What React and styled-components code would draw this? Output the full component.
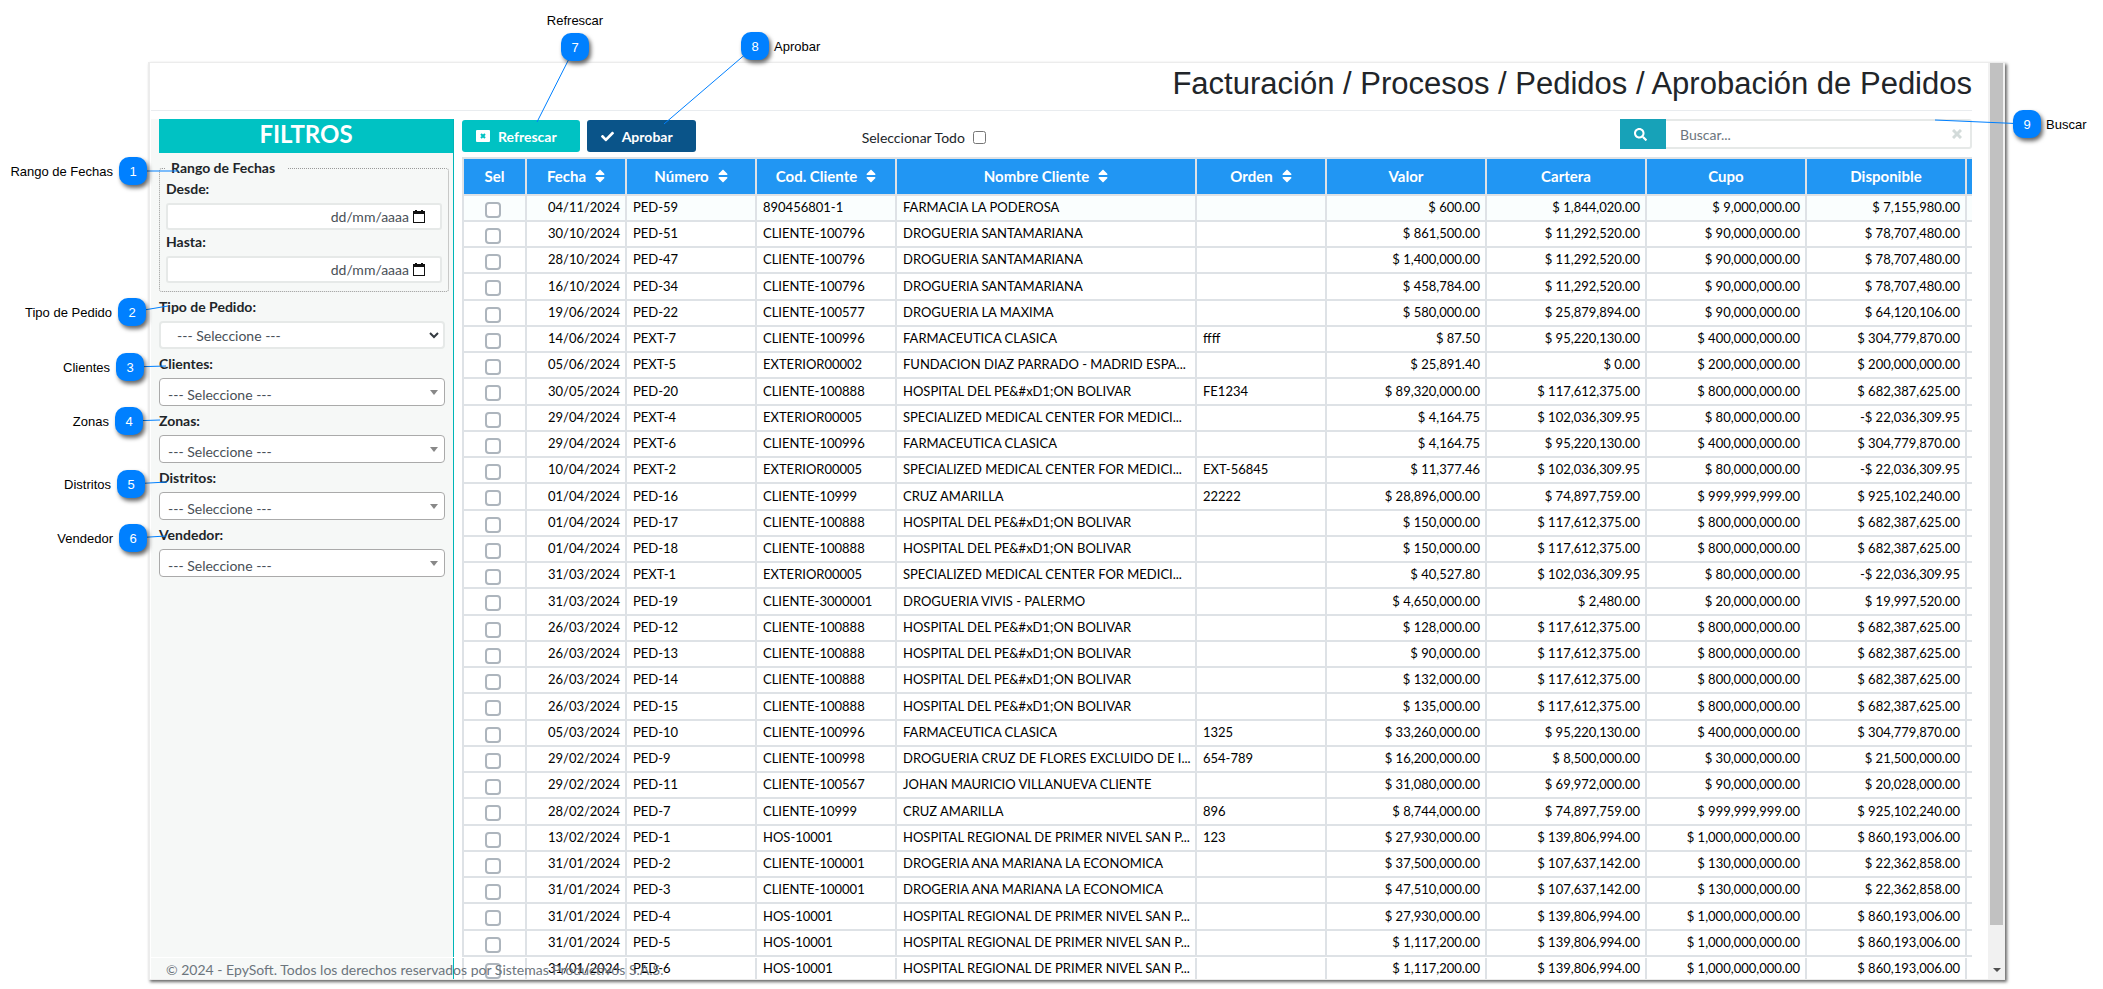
import React, { useState } from 'react'
import styled, { createGlobalStyle } from 'styled-components'
import { FaCheck, FaSearch, FaSort } from 'react-icons/fa'

const clientes = {
    dro: ['CLIENTE-100796', 'DROGUERIA SANTAMARIANA'],
    farma: ['CLIENTE-100996', 'FARMACEUTICA CLASICA'],
    hosp: ['CLIENTE-100888', 'HOSPITAL DEL PE&#xD1;ON BOLIVAR'],
    smc: ['EXTERIOR00005', 'SPECIALIZED MEDICAL CENTER FOR MEDICI...'],
    cruz: ['CLIENTE-10999', 'CRUZ AMARILLA'],
    ana: ['CLIENTE-100001', 'DROGERIA ANA MARIANA LA ECONOMICA'],
    hos: ['HOS-10001', 'HOSPITAL REGIONAL DE PRIMER NIVEL SAN P...'],
}

// fecha, numero, codigo, nombre, orden, valor, cartera, cupo, disponible
const pedidos = [
    ['04/11/2024', 'PED-59', '890456801-1', 'FARMACIA LA PODEROSA', '', '$ 600.00', '$ 1,844,020.00', '$ 9,000,000.00', '$ 7,155,980.00'],
    ['30/10/2024', 'PED-51', ...clientes.dro, '', '$ 861,500.00', '$ 11,292,520.00', '$ 90,000,000.00', '$ 78,707,480.00'],
    ['28/10/2024', 'PED-47', ...clientes.dro, '', '$ 1,400,000.00', '$ 11,292,520.00', '$ 90,000,000.00', '$ 78,707,480.00'],
    ['16/10/2024', 'PED-34', ...clientes.dro, '', '$ 458,784.00', '$ 11,292,520.00', '$ 90,000,000.00', '$ 78,707,480.00'],
    ['19/06/2024', 'PED-22', 'CLIENTE-100577', 'DROGUERIA LA MAXIMA', '', '$ 580,000.00', '$ 25,879,894.00', '$ 90,000,000.00', '$ 64,120,106.00'],
    ['14/06/2024', 'PEXT-7', ...clientes.farma, 'ffff', '$ 87.50', '$ 95,220,130.00', '$ 400,000,000.00', '$ 304,779,870.00'],
    ['05/06/2024', 'PEXT-5', 'EXTERIOR00002', 'FUNDACION DIAZ PARRADO - MADRID ESPA...', '', '$ 25,891.40', '$ 0.00', '$ 200,000,000.00', '$ 200,000,000.00'],
    ['30/05/2024', 'PED-20', ...clientes.hosp, 'FE1234', '$ 89,320,000.00', '$ 117,612,375.00', '$ 800,000,000.00', '$ 682,387,625.00'],
    ['29/04/2024', 'PEXT-4', ...clientes.smc, '', '$ 4,164.75', '$ 102,036,309.95', '$ 80,000,000.00', '-$ 22,036,309.95'],
    ['29/04/2024', 'PEXT-6', ...clientes.farma, '', '$ 4,164.75', '$ 95,220,130.00', '$ 400,000,000.00', '$ 304,779,870.00'],
    ['10/04/2024', 'PEXT-2', ...clientes.smc, 'EXT-56845', '$ 11,377.46', '$ 102,036,309.95', '$ 80,000,000.00', '-$ 22,036,309.95'],
    ['01/04/2024', 'PED-16', ...clientes.cruz, '22222', '$ 28,896,000.00', '$ 74,897,759.00', '$ 999,999,999.00', '$ 925,102,240.00'],
    ['01/04/2024', 'PED-17', ...clientes.hosp, '', '$ 150,000.00', '$ 117,612,375.00', '$ 800,000,000.00', '$ 682,387,625.00'],
    ['01/04/2024', 'PED-18', ...clientes.hosp, '', '$ 150,000.00', '$ 117,612,375.00', '$ 800,000,000.00', '$ 682,387,625.00'],
    ['31/03/2024', 'PEXT-1', ...clientes.smc, '', '$ 40,527.80', '$ 102,036,309.95', '$ 80,000,000.00', '-$ 22,036,309.95'],
    ['31/03/2024', 'PED-19', 'CLIENTE-3000001', 'DROGUERIA VIVIS - PALERMO', '', '$ 4,650,000.00', '$ 2,480.00', '$ 20,000,000.00', '$ 19,997,520.00'],
    ['26/03/2024', 'PED-12', ...clientes.hosp, '', '$ 128,000.00', '$ 117,612,375.00', '$ 800,000,000.00', '$ 682,387,625.00'],
    ['26/03/2024', 'PED-13', ...clientes.hosp, '', '$ 90,000.00', '$ 117,612,375.00', '$ 800,000,000.00', '$ 682,387,625.00'],
    ['26/03/2024', 'PED-14', ...clientes.hosp, '', '$ 132,000.00', '$ 117,612,375.00', '$ 800,000,000.00', '$ 682,387,625.00'],
    ['26/03/2024', 'PED-15', ...clientes.hosp, '', '$ 135,000.00', '$ 117,612,375.00', '$ 800,000,000.00', '$ 682,387,625.00'],
    ['05/03/2024', 'PED-10', ...clientes.farma, '1325', '$ 33,260,000.00', '$ 95,220,130.00', '$ 400,000,000.00', '$ 304,779,870.00'],
    ['29/02/2024', 'PED-9', 'CLIENTE-100998', 'DROGUERIA CRUZ DE FLORES EXCLUIDO DE I...', '654-789', '$ 16,200,000.00', '$ 8,500,000.00', '$ 30,000,000.00', '$ 21,500,000.00'],
    ['29/02/2024', 'PED-11', 'CLIENTE-100567', 'JOHAN MAURICIO VILLANUEVA CLIENTE', '', '$ 31,080,000.00', '$ 69,972,000.00', '$ 90,000,000.00', '$ 20,028,000.00'],
    ['28/02/2024', 'PED-7', ...clientes.cruz, '896', '$ 8,744,000.00', '$ 74,897,759.00', '$ 999,999,999.00', '$ 925,102,240.00'],
    ['13/02/2024', 'PED-1', ...clientes.hos, '123', '$ 27,930,000.00', '$ 139,806,994.00', '$ 1,000,000,000.00', '$ 860,193,006.00'],
    ['31/01/2024', 'PED-2', ...clientes.ana, '', '$ 37,500,000.00', '$ 107,637,142.00', '$ 130,000,000.00', '$ 22,362,858.00'],
    ['31/01/2024', 'PED-3', ...clientes.ana, '', '$ 47,510,000.00', '$ 107,637,142.00', '$ 130,000,000.00', '$ 22,362,858.00'],
    ['31/01/2024', 'PED-4', ...clientes.hos, '', '$ 27,930,000.00', '$ 139,806,994.00', '$ 1,000,000,000.00', '$ 860,193,006.00'],
    ['31/01/2024', 'PED-5', ...clientes.hos, '', '$ 1,117,200.00', '$ 139,806,994.00', '$ 1,000,000,000.00', '$ 860,193,006.00'],
    ['31/01/2024', 'PED-6', ...clientes.hos, '', '$ 1,117,200.00', '$ 139,806,994.00', '$ 1,000,000,000.00', '$ 860,193,006.00'],
]

const columnas = [
    { title: 'Sel', width: 63 },
    { title: 'Fecha', width: 100, sort: true, right: true },
    { title: 'Número', width: 130, sort: true },
    { title: 'Cod. Cliente', width: 140, sort: true },
    { title: 'Nombre Cliente', sort: true },
    { title: 'Orden', width: 130, sort: true },
    { title: 'Valor', width: 160, right: true },
    { title: 'Cartera', width: 160, right: true },
    { title: 'Cupo', width: 160, right: true },
    { title: 'Disponible', width: 160, right: true },
    { title: '', width: 5 },
]

// x, y: corner of the badge; to: where the line ends
const notas = [
    { n: 1, text: 'Rango de Fechas', x: 119, y: 157, side: 'left', to: [178, 171] },
    { n: 2, text: 'Tipo de Pedido', x: 118, y: 298, side: 'left', to: [168, 306] },
    { n: 3, text: 'Clientes', x: 116, y: 353, side: 'left', to: [166, 366] },
    { n: 4, text: 'Zonas', x: 115, y: 407, side: 'left', to: [160, 420] },
    { n: 5, text: 'Distritos', x: 117, y: 470, side: 'left', to: [167, 482] },
    { n: 6, text: 'Vendedor', x: 119, y: 524, side: 'left', to: [166, 536] },
    { n: 7, text: 'Refrescar', x: 561, y: 33, side: 'top', to: [537, 122] },
    { n: 8, text: 'Aprobar', x: 741, y: 32, side: 'right', to: [664, 124] },
    { n: 9, text: 'Buscar', x: 2013, y: 110, side: 'right', to: [1935, 120] },
]

function Filtro({ id, label, native }) {
    return (
        <>
            <Label htmlFor={id}>{label}</Label>
            <SelectWrap>
                <Select id={id} $native={native}>
                    <option>--- Seleccione ---</option>
                </Select>
                {native ? <Chevron viewBox="0 0 10 7"><path d="M1 1l4 4 4-4" /></Chevron> : <Caret />}
            </SelectWrap>
        </>
    )
}

function Fecha({ id, label }) {
    return (
        <>
            <Label htmlFor={id}>{label}</Label>
            <DateBox>
                <DateInput id={id} placeholder="dd/mm/aaaa" />
                <CalendarIcon viewBox="0 0 12 13">
                    <path d="M0 1h2V0h2v1h4V0h2v1h2v12H0zM1 4v8h10V4z" fillRule="evenodd" />
                </CalendarIcon>
            </DateBox>
        </>
    )
}

function App() {
    const [todos, setTodos] = useState(false)

    return (
        <Page>
            <GlobalStyle />
            <Window>
                <Main>
                    <Header>
                        <Title>Facturación / Procesos / Pedidos / Aprobación de Pedidos</Title>
                    </Header>
                    <Body>
                        <Sidebar>
                            <SidebarTitle>FILTROS</SidebarTitle>
                            <Filters>
                                <Fieldset>
                                    <Legend>Rango de Fechas</Legend>
                                    <Fecha id="desde" label="Desde:" />
                                    <Fecha id="hasta" label="Hasta:" />
                                </Fieldset>
                                <Filtro id="tipo" label="Tipo de Pedido:" native />
                                <Filtro id="clientes" label="Clientes:" />
                                <Filtro id="zonas" label="Zonas:" />
                                <Filtro id="distritos" label="Distritos:" />
                                <Filtro id="vendedor" label="Vendedor:" />
                            </Filters>
                        </Sidebar>
                        <Content>
                            <Toolbar>
                                <Button $color="#00c2c3">
                                    <svg width="14" height="12" viewBox="0 0 14 12">
                                        <rect width="14" height="12" rx="1" fill="#fff" />
                                        <path d="M5 4l4 4M9 4l-4 4" stroke="#00c2c3" strokeWidth="2" />
                                    </svg>
                                    Refrescar
                                </Button>
                                <Button $color="#0a5489"><FaCheck size={13} />Aprobar</Button>
                                <SelectAll>
                                    Seleccionar Todo
                                    <SmallCheck type="checkbox" checked={todos} onChange={e => setTodos(e.target.checked)} />
                                </SelectAll>
                                <Search>
                                    <SearchButton aria-label="Buscar"><FaSearch size={13} /></SearchButton>
                                    <SearchInput aria-label="Buscar" placeholder="Buscar..." />
                                    <ClearButton aria-label="Limpiar">
                                        <svg width="10" height="10" viewBox="0 0 10 10">
                                            <path d="M1 1l8 8M9 1l-8 8" stroke="currentColor" strokeWidth="3" />
                                        </svg>
                                    </ClearButton>
                                </Search>
                            </Toolbar>
                            <Table>
                                <colgroup>
                                    {columnas.map((c, i) => <Col key={i} $width={c.width} />)}
                                </colgroup>
                                <thead>
                                    <tr>
                                        {columnas.map((c, i) => (
                                            <Th key={i}>
                                                <ThInner $sort={c.sort}>{c.title}{c.sort && <FaSort size={16} />}</ThInner>
                                            </Th>
                                        ))}
                                    </tr>
                                </thead>
                                <tbody>
                                    {pedidos.map(p => (
                                        <Row key={p[1]}>
                                            <CheckTd>
                                                <RowCheck type="checkbox" aria-label={p[1]} />
                                            </CheckTd>
                                            {p.map((value, i) => <Td key={i} $right={columnas[i + 1].right}>{value}</Td>)}
                                            <Td />
                                        </Row>
                                    ))}
                                </tbody>
                            </Table>
                        </Content>
                    </Body>
                    <Footer>© 2024 - EpySoft. Todos los derechos reservados por Sistemas Productivos S.A.S.</Footer>
                </Main>
                <Scrollbar>
                    <Thumb />
                    <ArrowDown />
                </Scrollbar>
            </Window>
            <Lines>
                {notas.map(n => <line key={n.n} x1={n.x + 14} y1={n.y + 14} x2={n.to[0]} y2={n.to[1]} />)}
            </Lines>
            {notas.map(n => (
                <Note key={n.n} style={{ left: n.x, top: n.y }}>
                    {n.n}
                    <NoteText $side={n.side}>{n.text}</NoteText>
                </Note>
            ))}
        </Page>
    )
}

export default App

const GlobalStyle = createGlobalStyle`
    * {
        box-sizing: border-box;
    }
    body {
        margin: 0;
        background: #fff;
        overflow: hidden;
    }
    button, input, select {
        font-family: inherit;
    }
`

const Page = styled.div`
    position: relative;
    height: 100vh;
    padding: 62px 98px 9px 148px;
    font-family: Lato, sans-serif;
    font-size: 14px;
    color: #212529;
`

const Window = styled.div`
    display: flex;
    height: 100%;
    padding-left: 1px;
    border: 1px solid #ececec;
    border-left-width: 2px;
    border-right-width: 0;
    box-shadow: 2px 2px 3px rgba(0, 0, 0, 0.6);
    overflow: hidden;
`

const Main = styled.main`
    position: relative;
    flex: 1;
    min-width: 0;
    display: flex;
    flex-direction: column;
    padding-right: 16px;
`

const Header = styled.header`
    height: 48px;
    flex: none;
    border-bottom: 1px solid #e9ecef;
`

const Title = styled.h1`
    margin: 0;
    font: 31px/42px "Liberation Sans", Arial, sans-serif;
    text-align: right;
    white-space: nowrap;
`

const Body = styled.div`
    flex: 1;
    min-height: 0;
    display: flex;
    gap: 8px;
    padding-top: 8px;
    overflow: hidden;
`

const Sidebar = styled.aside`
    width: 303px;
    flex: none;
    padding-left: 8px;
    background: #f6f8f7;
    border-right: 1px solid #00b5b8;
`

const SidebarTitle = styled.h2`
    margin: 0;
    height: 34px;
    background: #00c2c3;
    color: #fff;
    font-size: 24px;
    line-height: 30px;
    text-align: center;
`

const Filters = styled.div`
    padding-right: 8px;
`

const Fieldset = styled.fieldset`
    margin: 6px -4px 3px 0;
    padding: 0 6px 8px;
    border: 1px dotted #999;
    border-radius: 3px;
`

const Legend = styled.legend`
    padding: 0 12px 0 5px;
    font-weight: bold;
    line-height: 18px;
`

const Label = styled.label`
    display: block;
    padding: 3px 0 5px;
    font-weight: bold;
    line-height: 18px;
`

const DateBox = styled.div`
    display: flex;
    align-items: center;
    height: 27px;
    padding-right: 15px;
    background: #fff;
    border: 2px solid #e6e9e8;
    border-radius: 3px;
`

const DateInput = styled.input`
    flex: 1;
    min-width: 0;
    border: 0;
    background: none;
    text-align: right;
    font-size: 14px;
    &::placeholder {
        color: #495057;
    }
`

const CalendarIcon = styled.svg`
    width: 12px;
    height: 13px;
    margin-left: 2px;
    fill: #111;
`

const SelectWrap = styled.div`
    position: relative;
    margin-bottom: 3px;
`

const Select = styled.select`
    appearance: none;
    display: block;
    width: 100%;
    height: 28px;
    padding: ${p => p.$native ? '0 16px' : '4px 8px 0'};
    background: #fff;
    border: ${p => p.$native ? '2px solid #e6e9e8' : '1px solid #aaa'};
    border-radius: 4px;
    color: #495057;
    font-size: 14px;
`

const Chevron = styled.svg`
    position: absolute;
    right: 6px;
    top: 11px;
    width: 10px;
    height: 7px;
    fill: none;
    stroke: #343a40;
    stroke-width: 2;
`

const Caret = styled.span`
    position: absolute;
    right: 7px;
    top: 12px;
    border: 4px solid transparent;
    border-top: 5px solid #888;
    border-bottom: 0;
`

const Content = styled.section`
    flex: 1;
    min-width: 0;
    overflow: hidden;
`

const Toolbar = styled.div`
    display: flex;
    align-items: flex-end;
    height: 33px;
    margin-bottom: 5px;
`

const Button = styled.button`
    display: flex;
    align-items: center;
    gap: 8px;
    height: 32px;
    margin-right: 7px;
    padding: 0 23px 0 14px;
    border: 0;
    border-radius: 3px;
    background: ${p => p.$color};
    color: #fff;
    font-size: 14px;
    font-weight: bold;
`

const SelectAll = styled.label`
    display: flex;
    align-items: center;
    gap: 8px;
    height: 29px;
    margin-left: 159px;
`

const SmallCheck = styled.input`
    width: 13px;
    height: 13px;
    margin: 0;
`

const Search = styled.div`
    display: flex;
    align-items: center;
    align-self: flex-start;
    width: 352px;
    height: 30px;
    margin-left: auto;
    border: 2px solid #e6e9e8;
    border-radius: 3px;
    border-left: 0;
`

const SearchButton = styled.button`
    display: flex;
    align-items: center;
    justify-content: center;
    align-self: stretch;
    width: 46px;
    margin: -2px 0;
    padding: 0 5px 0 0;
    border: 0;
    background: #17a2b8;
    color: #fff;
`

const SearchInput = styled.input`
    flex: 1;
    min-width: 0;
    padding: 1px 14px 0;
    border: 0;
    background: none;
    font-size: 14px;
    &::placeholder {
        color: #6c757d;
    }
`

const ClearButton = styled.button`
    display: flex;
    padding: 0;
    margin-right: 8px;
    border: 0;
    background: none;
    color: #d3dbda;
`

const Table = styled.table`
    width: 100%;
    table-layout: fixed;
    border-spacing: 0;
    border-left: 2px solid #dee2e6;
    border-top: 2px solid #dee2e6;
`

const Col = styled.col`
    width: ${p => p.$width ? `${p.$width}px` : 'auto'};
`

const Th = styled.th`
    height: 37px;
    padding: 0 0 2px;
    background: #2196f3;
    border-right: 2px solid #dee2e6;
    border-bottom: 2px solid #dee2e6;
    color: #fff;
    font-size: 15px;
    &:last-child {
        border-right: 0;
    }
`

const ThInner = styled.span`
    display: flex;
    align-items: center;
    justify-content: center;
    gap: 6px;
    padding-left: ${p => p.$sort ? '3px' : '0'};
`

const Row = styled.tr`
    height: 26px;
    &:nth-child(4n) {
        height: 27px;
    }
    &:first-child {
        background: #fafefe;
    }
`

const Td = styled.td`
    padding: ${p => p.$right ? '0 5px 2px' : '0 2px 2px 6px'};
    border-right: 2px solid #dee2e6;
    border-bottom: 2px solid #dee2e6;
    color: #000;
    font-size: 13px;
    line-height: 18px;
    text-align: ${p => p.$right ? 'right' : 'left'};
    white-space: nowrap;
    overflow: hidden;
    text-overflow: ellipsis;
    &:last-child {
        border-right: 0;
        padding: 0;
    }
`

const CheckTd = styled(Td)`
    padding: 3px 5px 0 2px;
`

const RowCheck = styled.input`
    appearance: none;
    display: block;
    width: 16px;
    height: 16px;
    margin: 0 auto;
    border: 2px solid #adb5bd;
    border-radius: 4px;
    background: #fff;
    &:checked {
        background: #2196f3;
    }
`

// stays over the last row of the table
const Footer = styled.footer`
    position: absolute;
    left: 0;
    right: 0;
    bottom: 0;
    height: 22px;
    padding-left: 15px;
    border-top: 1px solid #fff;
    color: #6c757d;
    line-height: 23px;
    pointer-events: none;
`

const Scrollbar = styled.div`
    display: flex;
    flex-direction: column;
    align-items: center;
    width: 17px;
    padding-bottom: 7px;
    background: #f1f1f1;
`

const Thumb = styled.div`
    width: 13px;
    height: 862px;
    background: #c1c1c1;
`

const ArrowDown = styled.span`
    margin-top: auto;
    border: 4px solid transparent;
    border-top-color: #505050;
    border-bottom: 0;
`

const Lines = styled.svg`
    position: absolute;
    left: 0;
    top: 0;
    width: 100%;
    height: 100%;
    pointer-events: none;
    stroke: #0080ff;
`

const Note = styled.div`
    position: absolute;
    width: 28px;
    height: 28px;
    border-radius: 10px;
    background: #0080ff;
    box-shadow: 2px 3px 4px rgba(0, 0, 0, 0.6);
    color: #fff;
    font: 13px/29px "Liberation Sans", Arial, sans-serif;
    text-align: center;
`

const NoteText = styled.span`
    position: absolute;
    color: #000;
    white-space: nowrap;
    ${p => p.$side === 'left' && 'right: 34px;'}
    ${p => p.$side === 'right' && 'left: 33px;'}
    ${p => p.$side === 'top' && 'left: 50%; bottom: 26px; transform: translateX(-50%);'}
`
